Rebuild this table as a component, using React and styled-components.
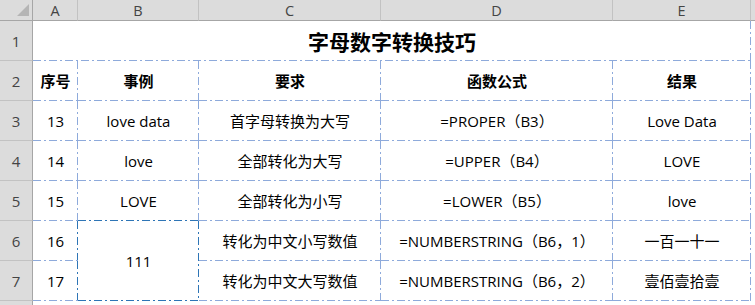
import React from "react";
import styled, { createGlobalStyle } from "styled-components";

const LIGHT = "#8eaadb";
const DARK = "#2e75b6";

const GlobalStyle = createGlobalStyle`
  html, body { margin: 0; padding: 0; background: #fff; }
  * { box-sizing: border-box; }
`;

// excel style dash-dot border, drawn as a background layer
const dashH = c =>
  `repeating-linear-gradient(to right, ${c} 0 8px, transparent 8px 11px, ${c} 11px 13px, transparent 13px 16px)`;
const dashV = c =>
  `repeating-linear-gradient(to bottom, ${c} 0 8px, transparent 8px 11px, ${c} 11px 13px, transparent 13px 16px)`;

const edges = ({ $b, $r }) => {
  const layers = [];
  if ($b) layers.push(`${dashH($b)} left bottom / 100% 1px no-repeat`);
  if ($r) layers.push(`${dashV($r)} right top / 1px 100% no-repeat`);
  layers.push("#fff");
  return `background: ${layers.join(", ")};`;
};

const Sheet = styled.div`
  width: 755px;
  height: 305px;
  overflow: hidden;
  display: grid;
  grid-template-columns: 33px 45px 121px 182px 232px 138px 1fr;
  grid-template-rows: 21px repeat(7, 40px) 1fr;
  font-family: "Open Sans", "Noto Sans CJK SC", sans-serif;
  color: #000;
`;

const Corner = styled.div`
  background: #dcdcdc;
  border-right: 1px solid #a6a6a6;
  border-bottom: 1px solid #a6a6a6;
  display: flex;
  align-items: flex-end;
  justify-content: flex-end;
  padding: 0 3px 4px 0;
  &::after {
    content: "";
    width: 12px;
    height: 12px;
    background: #b5b5b5;
    clip-path: polygon(100% 0, 100% 100%, 0 100%);
  }
`;

const ColHead = styled.div`
  background: #dcdcdc;
  border-bottom: 1px solid #a6a6a6;
  border-right: ${p => (p.$last ? "none" : "1px solid #c2c2c2")};
  display: flex;
  align-items: center;
  justify-content: center;
  font-size: 14.5px;
  color: #444;
`;

const RowHead = styled.div`
  background: #dcdcdc;
  border-right: 1px solid #a6a6a6;
  border-bottom: ${p => (p.$last ? "none" : "1px solid #c2c2c2")};
  display: flex;
  align-items: center;
  justify-content: center;
  font-size: 15px;
  color: #444;
`;

const Cell = styled.div`
  ${edges};
  grid-column: ${p => p.$col || "auto"};
  grid-row: ${p => p.$row || "auto"};
  display: flex;
  align-items: center;
  justify-content: center;
  font-size: 15px;
  font-weight: ${p => (p.$bold ? 700 : 400)};
  white-space: nowrap;
  padding-bottom: 1px;
`;

const Title = styled(Cell)`
  font-size: 21px;
  font-weight: 700;
`;

const Blank = styled.div`
  background: #fff;
`;

const cols = ["A", "B", "C", "D", "E"];
const head = ["序号", "事例", "要求", "函数公式", "结果"];

const rows = [
  ["13", "love data", "首字母转换为大写", "=PROPER（B3）", "Love Data"],
  ["14", "love", "全部转化为大写", "=UPPER（B4）", "LOVE"],
  ["15", "LOVE", "全部转化为小写", "=LOWER（B5）", "love"],
  ["16", null, "转化为中文小写数值", "=NUMBERSTRING（B6，1）", "一百一十一"],
  ["17", null, "转化为中文大写数值", "=NUMBERSTRING（B6，2）", "壹佰壹拾壹"],
];

export default function App() {
  return (
    <>
      <GlobalStyle />
      <Sheet>
        <Corner />
        {cols.map(c => (
          <ColHead key={c}>{c}</ColHead>
        ))}
        <ColHead $last />

        <RowHead>1</RowHead>
        <Title $col="2 / 7" $b={LIGHT} $r={LIGHT}>
          字母数字转换技巧
        </Title>
        <Blank />

        <RowHead>2</RowHead>
        {head.map(h => (
          <Cell key={h} $bold $b={LIGHT} $r={LIGHT}>
            {h}
          </Cell>
        ))}
        <Blank />

        {rows.map((r, i) => (
          <React.Fragment key={i}>
            <RowHead>{i + 3}</RowHead>
            <Cell $b={LIGHT} $r={i >= 3 ? DARK : LIGHT}>{r[0]}</Cell>
            {r[1] !== null && (
              <Cell $b={i === 2 ? DARK : LIGHT} $r={LIGHT}>
                {r[1]}
              </Cell>
            )}
            {i === 3 && (
              <Cell $row="span 2" $b={DARK} $r={DARK}>
                111
              </Cell>
            )}
            <Cell $b={LIGHT} $r={LIGHT}>{r[2]}</Cell>
            <Cell $b={LIGHT} $r={LIGHT}>{r[3]}</Cell>
            <Cell $b={LIGHT} $r={LIGHT}>{r[4]}</Cell>
            <Blank />
          </React.Fragment>
        ))}

        <RowHead $last />
      </Sheet>
    </>
  );
}
